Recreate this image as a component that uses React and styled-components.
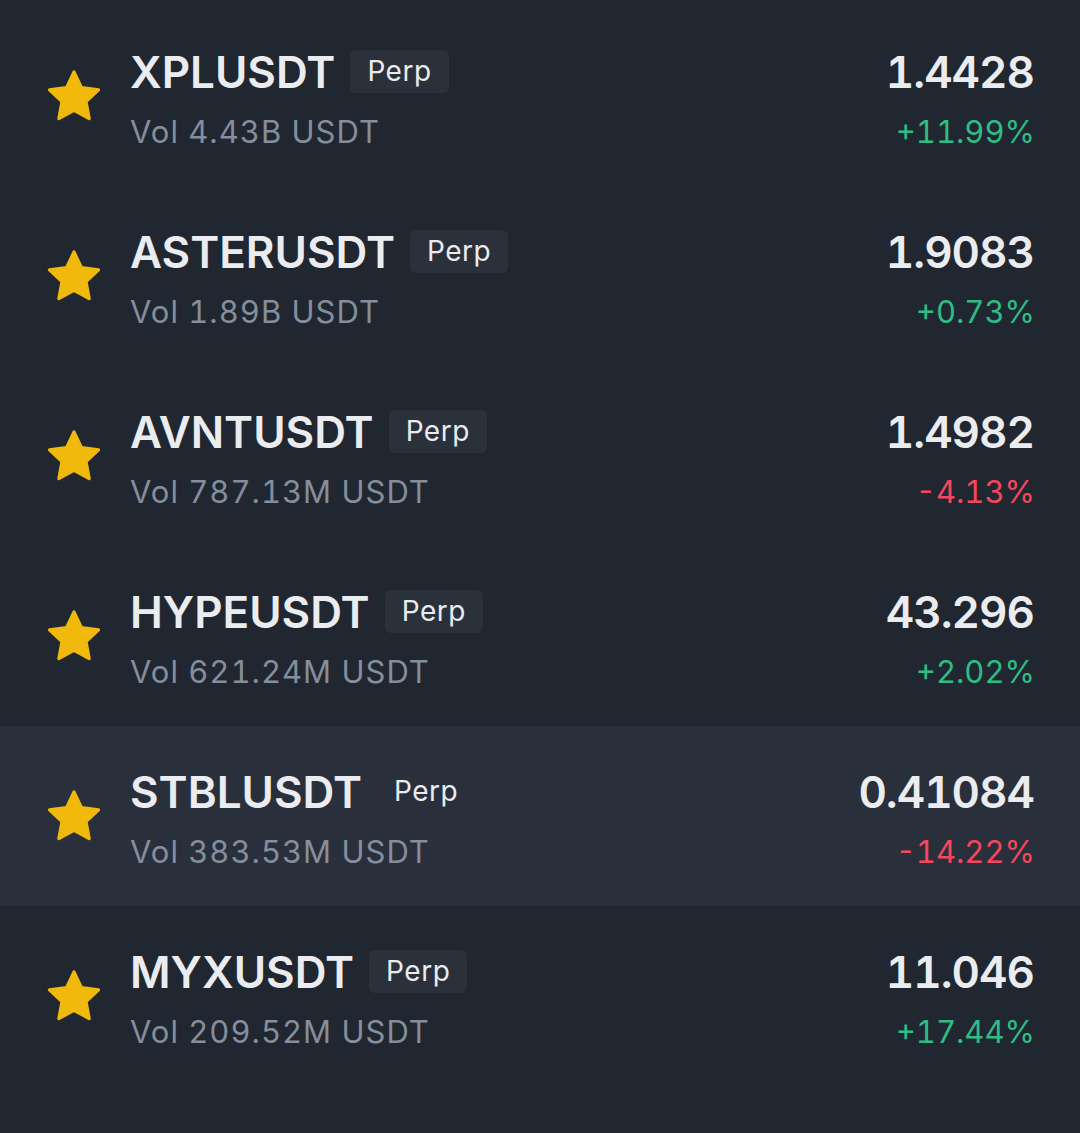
import React from 'react'
import styled, { createGlobalStyle } from 'styled-components'

const Global = createGlobalStyle`
  html, body {
    margin: 0;
    padding: 0;
    background: #212730;
  }
  body {
    font-family: Inter, "Noto Sans", sans-serif;
    -webkit-font-smoothing: antialiased;
  }
`

const List = styled.div`
  padding-top: 6px;
  min-height: 1133px;
  box-sizing: border-box;
  background: #212730;
`

const Row = styled.div`
  height: 180px;
  display: flex;
  align-items: center;
  padding: 0 45px 0 41px;
  background: ${p => (p.active ? '#2a303b' : 'transparent')};
`

const Star = styled.svg`
  width: 66px;
  height: 64px;
  flex: none;
  margin-right: 23px;
  margin-top: 2px;
`

const Info = styled.div`
  flex: 1;
  display: flex;
  flex-direction: column;
  gap: 12px;
  margin-top: 8px;
`

const TitleLine = styled.div`
  display: flex;
  align-items: center;
  gap: 15px;
`

const Symbol = styled.span`
  font-size: 44px;
  font-weight: 600;
  color: #eaecef;
  line-height: 52px;
`

const Badge = styled.span`
  font-size: 28px;
  font-weight: 400;
  color: #eaecef;
  background: ${p => (p.plain ? 'transparent' : '#2b313b')};
  border-radius: 6px;
  padding: 0 17px;
  height: 43px;
  line-height: 43px;
  letter-spacing: 0.5px;
  margin-top: -2px;
`

const Sub = styled.span`
  font-size: 31px;
  color: #848e9c;
  line-height: 44px;
  letter-spacing: 1px;
  font-variant-numeric: tabular-nums;
`

const Right = styled.div`
  display: flex;
  flex-direction: column;
  align-items: flex-end;
  gap: 12px;
  margin-top: 8px;
`

const Price = styled.span`
  font-size: 44px;
  font-weight: 600;
  color: #eaecef;
  line-height: 52px;
  letter-spacing: -1px;
  margin-right: 1px;
  font-variant-numeric: tabular-nums;
`

const Change = styled.span`
  font-size: 31px;
  line-height: 44px;
  font-variant-numeric: tabular-nums;
  color: ${p => (p.down ? '#f6465d' : '#2ebd85')};
`

const rows = [
  { sym: 'XPLUSDT', vol: '4.43B', price: '1.4428', chg: '+11.99%' },
  { sym: 'ASTERUSDT', vol: '1.89B', price: '1.9083', chg: '+0.73%' },
  { sym: 'AVNTUSDT', vol: '787.13M', price: '1.4982', chg: '-4.13%' },
  { sym: 'HYPEUSDT', vol: '621.24M', price: '43.296', chg: '+2.02%' },
  { sym: 'STBLUSDT', vol: '383.53M', price: '0.41084', chg: '-14.22%', active: true },
  { sym: 'MYXUSDT', vol: '209.52M', price: '11.046', chg: '+17.44%' },
]

function StarIcon() {
  return (
    <Star viewBox="0 0 24 24">
      <path
        d="M12 2.6l2.8 5.9 6.4.8-4.7 4.4 1.2 6.4L12 17l-5.7 3.1 1.2-6.4-4.7-4.4 6.4-.8z"
        fill="#f0b90b"
        stroke="#f0b90b"
        strokeWidth="1.2"
        strokeLinejoin="round"
      />
    </Star>
  )
}

export default function App() {
  return (
    <List>
      <Global />
      {rows.map(r => (
        <Row key={r.sym} active={r.active}>
          <StarIcon />
          <Info>
            <TitleLine>
              <Symbol>{r.sym}</Symbol>
              <Badge plain={r.active}>Perp</Badge>
            </TitleLine>
            <Sub>Vol {r.vol} USDT</Sub>
          </Info>
          <Right>
            <Price>{r.price}</Price>
            <Change down={r.chg.startsWith('-')}>{r.chg}</Change>
          </Right>
        </Row>
      ))}
    </List>
  )
}
